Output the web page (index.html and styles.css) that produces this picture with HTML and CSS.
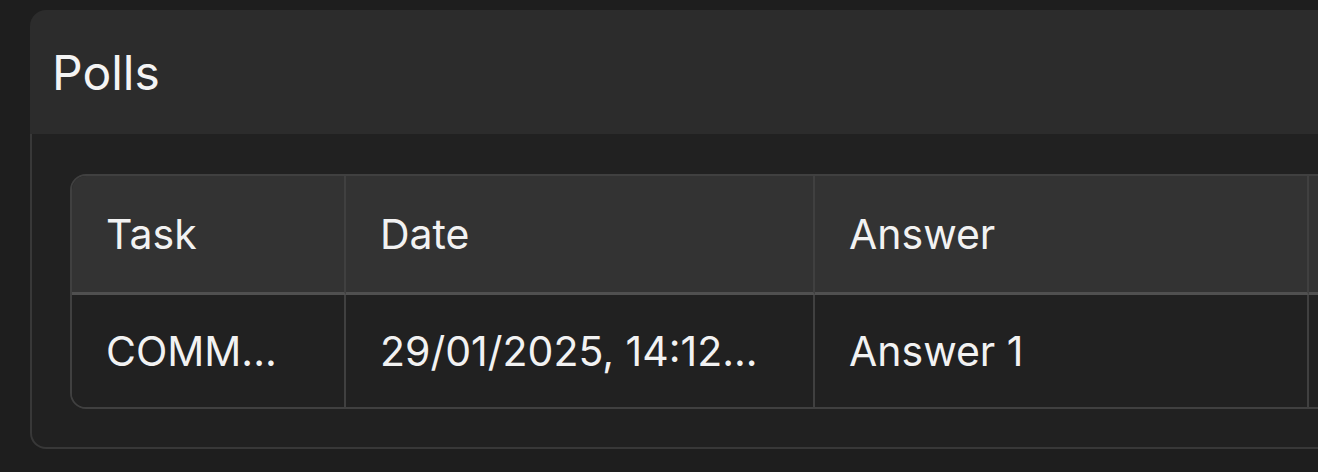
FILE: index.html
```html
<!DOCTYPE html>
<html lang="en">
<head>
<meta charset="utf-8">
<title>Polls</title>
<link rel="stylesheet" href="styles.css">
</head>
<body>
<section class="card">
  <header class="card-header">
    <h2 class="card-title">Polls</h2>
  </header>
  <div class="card-body">
    <div class="table-wrap">
      <table class="polls-table">
        <colgroup>
          <col class="col-task">
          <col class="col-date">
          <col class="col-answer">
          <col class="col-extra">
        </colgroup>
        <thead>
          <tr>
            <th>Task</th>
            <th>Date</th>
            <th>Answer</th>
            <th></th>
          </tr>
        </thead>
        <tbody>
          <tr>
            <td>COMM...</td>
            <td>29/01/2025, 14:12...</td>
            <td>Answer 1</td>
            <td></td>
          </tr>
        </tbody>
      </table>
    </div>
  </div>
</section>
</body>
</html>
```

FILE: styles.css
```css
html, body {
  margin: 0;
  padding: 0;
}
body {
  background: #1e1e1e;
  width: 1318px;
  height: 472px;
  overflow: hidden;
  font-family: Inter, "Noto Sans", sans-serif;
  color: #f2f2f2;
}
.card {
  margin: 10px 0 0 30px;
  width: 1500px;
  display: flex;
  flex-direction: column;
}
.card-header {
  height: 124px;
  background: #2c2c2c;
  border-radius: 16px 16px 0 0;
  display: flex;
  align-items: center;
  padding-left: 22px;
}
.card-title {
  margin: 0;
  font-size: 48px;
  font-weight: 400;
  color: #f4f4f4;
  letter-spacing: 0;
}
.card-body {
  background: #212121;
  border: 2px solid #383838;
  border-top: none;
  border-radius: 0 0 16px 16px;
  padding: 40px 0 38px 38px;
}
.table-wrap {
  border: 2px solid #404040;
  border-radius: 16px;
  overflow: hidden;
  width: 1440px;
}
.polls-table {
  border-collapse: separate;
  border-spacing: 0;
  table-layout: fixed;
  width: 100%;
  font-size: 41px;
}
.col-task { width: 274px; }
.col-date { width: 469px; }
.col-answer { width: 494px; }
.col-extra { width: auto; }
.polls-table th,
.polls-table td {
  text-align: left;
  font-weight: 400;
  padding: 0 0 0 34px;
  border-right: 2px solid #404040;
  white-space: nowrap;
  overflow: hidden;
}
.polls-table th:last-child,
.polls-table td:last-child {
  border-right: none;
}
.polls-table thead th {
  background: #333333;
  height: 116px;
  border-bottom: 3px solid #505050;
  color: #f2f2f2;
}
.polls-table tbody td {
  background: #212121;
  height: 112px;
  color: #f2f2f2;
}
```
